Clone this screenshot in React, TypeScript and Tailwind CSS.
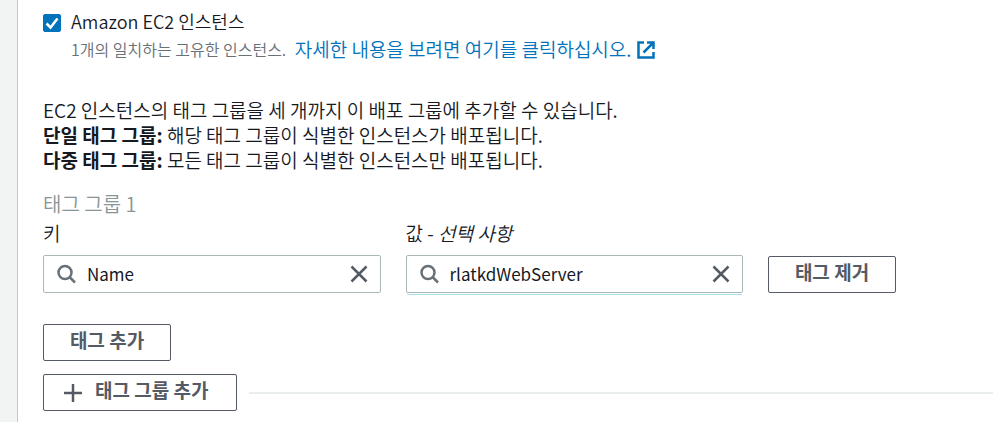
import { useState } from "react";

function SearchIcon() {
  return (
    <svg viewBox="0 0 20 20" className="size-5 shrink-0" fill="none" stroke="#687078" strokeWidth="2.5" aria-hidden="true">
      <circle cx="8" cy="8.5" r="6.5" />
      <path d="M12.5 13l5.5 5.5" />
    </svg>
  );
}

function ExternalIcon() {
  return (
    <svg viewBox="0 0 18 18" className="mt-px size-[18px] shrink-0" fill="none" stroke="#0073bb" strokeWidth="2.5" aria-hidden="true">
      <path d="M7 1.5H1.5v15h15V11" />
      <path d="M10 1.5h6.5V8" />
      <path d="M16.5 1.5L6.5 11.5" />
    </svg>
  );
}

type SearchFieldProps = {
  id: string;
  initial: string;
  active?: boolean;
};

function SearchField({ id, initial, active }: SearchFieldProps) {
  const [value, setValue] = useState(initial);
  return (
    <div
      className={
        active
          ? "flex h-[38px] items-center rounded-[2px] border border-[#aab7b8] pr-3 pl-[13px] shadow-[0_2px_0_-1px_#ffffff,0_3px_0_-1px_#a9dfe8]"
          : "flex h-[38px] items-center rounded-[2px] border border-[#aab7b8] pr-3 pl-[13px]"
      }
    >
      <SearchIcon />
      <input
        id={id}
        type="text"
        value={value}
        onChange={(e) => setValue(e.target.value)}
        className="ml-[10px] h-full min-w-0 flex-1 bg-transparent pb-[2px] text-[17px] leading-6 font-normal text-[#16191f] outline-none"
      />
      <button type="button" aria-label="지우기" onClick={() => setValue("")} className="shrink-0">
        <svg viewBox="0 0 18 18" className="size-[18px]" fill="none" stroke="#545b64" strokeWidth="2.5" aria-hidden="true">
          <path d="M1.5 1.5l15 15M16.5 1.5l-15 15" />
        </svg>
      </button>
    </div>
  );
}

const buttonClass =
  "flex h-[37px] items-center rounded-[2px] border border-[#545b64] bg-white pb-[5px] text-[19px] leading-6 font-bold text-[#545b64]";

export default function App() {
  const [checked, setChecked] = useState(true);
  return (
    <div className="flex min-h-screen bg-[#f2f3f3] pl-[17px] font-['Noto_Sans_CJK_KR',sans-serif] text-[19px] leading-[25px] font-[350] text-[#16191f]">
      <main className="min-w-0 flex-1 border-l border-[#c3c9c9] bg-white pt-2 pr-3 pb-[10px] pl-[25px]">
        <div className="flex gap-[10px]">
          <span className="relative mt-[6px] size-[18px] shrink-0">
            <input
              id="ec2"
              type="checkbox"
              checked={checked}
              onChange={(e) => setChecked(e.target.checked)}
              className="peer block size-[18px] appearance-none rounded-[2px] border border-[#687078] checked:border-[#0073bb] checked:bg-[#0073bb]"
            />
            <svg
              viewBox="0 0 18 18"
              className="pointer-events-none absolute inset-0 hidden size-[18px] peer-checked:block"
              fill="none"
              stroke="#ffffff"
              strokeWidth="2.5"
              aria-hidden="true"
            >
              <path d="M3.5 9.5l4 4 7-9" />
            </svg>
          </span>
          <div>
            <label htmlFor="ec2" className="block text-lg leading-[26px]">
              Amazon EC2 인스턴스
            </label>
            <p className="mt-px flex items-center gap-[5px] text-base leading-7 text-[#687078]">
              <span>1개의 일치하는 고유한 인스턴스.&nbsp;</span>
              <a href="#instances" className="flex items-center gap-[6px] text-[19px] leading-7 text-[#0073bb]">
                자세한 내용을 보려면 여기를 클릭하십시오.
                <ExternalIcon />
              </a>
            </p>
          </div>
        </div>

        <p className="mt-[34px]">
          EC2 인스턴스의 태그 그룹을 세 개까지 이 배포 그룹에 추가할 수 있습니다.
          <br />
          <strong className="font-bold">단일 태그 그룹:</strong> 해당 태그 그룹이 식별한 인스턴스가 배포됩니다.
          <br />
          <strong className="font-bold">다중 태그 그룹:</strong> 모든 태그 그룹이 식별한 인스턴스만 배포됩니다.
        </p>

        <h2 className="mt-[19px] text-xl leading-[25px] text-[#879596]">태그 그룹 1</h2>

        <div className="mt-1 grid grid-cols-[3fr_3fr_2fr] items-end gap-x-[25px]">
          <div>
            <label htmlFor="tag-key" className="mb-[10px] block">
              키
            </label>
            <SearchField id="tag-key" initial="Name" />
          </div>
          <div>
            <label htmlFor="tag-value" className="mb-[10px] block">
              값 - <i>선택 사항</i>
            </label>
            <SearchField id="tag-value" initial="rlatkdWebServer" active />
          </div>
          <button type="button" className={`${buttonClass} w-32 justify-center`}>
            태그 제거
          </button>
        </div>

        <button type="button" className={`${buttonClass} mt-[31px] w-32 justify-center`}>
          태그 추가
        </button>

        <div className="mt-[13px] flex items-center gap-3">
          <button type="button" className={`${buttonClass} w-[194px] gap-3 pl-[19px]`}>
            <svg viewBox="0 0 20 20" className="mt-[5px] size-5" fill="none" stroke="#545b64" strokeWidth="2.5" aria-hidden="true">
              <path d="M10 1v18M1 10h18" />
            </svg>
            태그 그룹 추가
          </button>
          <hr className="flex-1 border-t-2 border-[#eaeded]" />
        </div>
      </main>
    </div>
  );
}
